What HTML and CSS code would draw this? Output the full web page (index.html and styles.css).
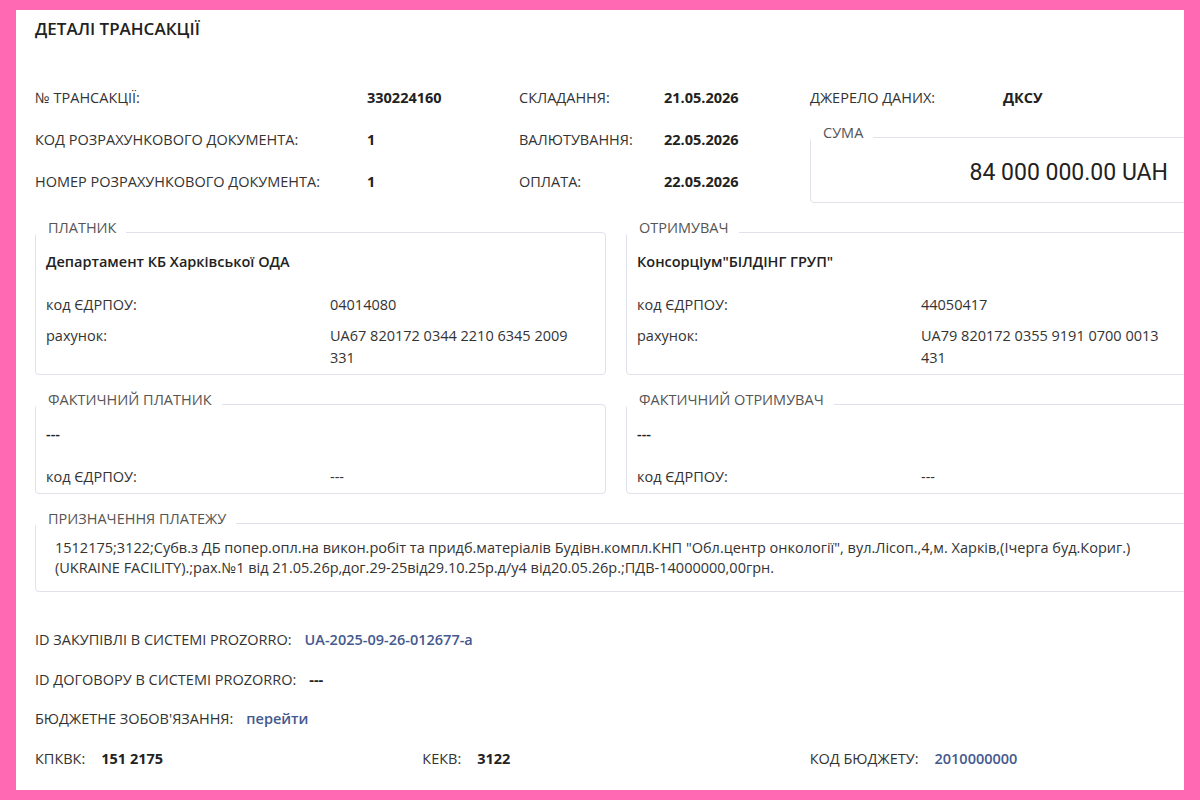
FILE: index.html
```html
<!DOCTYPE html>
<html lang="uk">
<head>
   <meta charset="UTF-8">
   <meta name="viewport" content="width=device-width, initial-scale=1.0">
   <title>Деталі трансакції</title>
   <link rel="stylesheet" href="styles.css">
</head>

<body>
   <div class="frame">
      <div class="page">
         <h1>ДЕТАЛІ ТРАНСАКЦІЇ</h1>

         <!-- шапка трансакції -->
         <div class="info">
            <span class="lbl">№ ТРАНСАКЦІЇ:</span><span class="val">330224160</span>
            <span class="lbl">СКЛАДАННЯ:</span><span class="val">21.05.2026</span>
            <span class="lbl">ДЖЕРЕЛО ДАНИХ:</span><span class="val">ДКСУ</span>
            <span class="lbl">КОД РОЗРАХУНКОВОГО ДОКУМЕНТА:</span><span class="val">1</span>
            <span class="lbl">ВАЛЮТУВАННЯ:</span><span class="val">22.05.2026</span>
            <span class="lbl">НОМЕР РОЗРАХУНКОВОГО ДОКУМЕНТА:</span><span class="val">1</span>
            <span class="lbl">ОПЛАТА:</span><span class="val">22.05.2026</span>

            <fieldset class="box sum">
               <legend>СУМА</legend>
               <div class="amount">84 000 000.00 UAH</div>
            </fieldset>
         </div>

         <!-- сторони -->
         <div class="parties">
            <fieldset class="box">
               <legend>ПЛАТНИК</legend>
               <div class="name">Департамент КБ Харківської ОДА</div>
               <div class="rows">
                  <span>код ЄДРПОУ:</span><span>04014080</span>
                  <span>рахунок:</span><span>UA67 820172 0344 2210 6345 2009 331</span>
               </div>
            </fieldset>

            <fieldset class="box">
               <legend>ОТРИМУВАЧ</legend>
               <div class="name">Консорціум"БІЛДІНГ ГРУП"</div>
               <div class="rows">
                  <span>код ЄДРПОУ:</span><span>44050417</span>
                  <span>рахунок:</span><span>UA79 820172 0355 9191 0700 0013 431</span>
               </div>
            </fieldset>

            <fieldset class="box">
               <legend>ФАКТИЧНИЙ ПЛАТНИК</legend>
               <div class="name">---</div>
               <div class="rows">
                  <span>код ЄДРПОУ:</span><span>---</span>
               </div>
            </fieldset>

            <fieldset class="box">
               <legend>ФАКТИЧНИЙ ОТРИМУВАЧ</legend>
               <div class="name">---</div>
               <div class="rows">
                  <span>код ЄДРПОУ:</span><span>---</span>
               </div>
            </fieldset>
         </div>

         <fieldset class="box purpose">
            <legend>ПРИЗНАЧЕННЯ ПЛАТЕЖУ</legend>
            <p>1512175;3122;Субв.з ДБ попер.опл.на викон.робіт та придб.матеріалів Будівн.компл.КНП "Обл.центр онкології", вул.Лісоп.,4,м. Харків,(Ічерга буд.Кориг.) (UKRAINE FACILITY).;рах.№1 від 21.05.26р,дог.29-25від29.10.25р.д/у4 від20.05.26р.;ПДВ-14000000,00грн.</p>
         </fieldset>

         <!-- додаткові реквізити -->
         <div class="extra">
            <div><span class="lbl">ID ЗАКУПІВЛІ В СИСТЕМІ PROZORRO:</span><a class="link" href="#">UA-2025-09-26-012677-a</a></div>
            <div><span class="lbl">ID ДОГОВОРУ В СИСТЕМІ PROZORRO:</span><span class="val">---</span></div>
            <div><span class="lbl">БЮДЖЕТНЕ ЗОБОВ'ЯЗАННЯ:</span><a class="link" href="#">перейти</a></div>
            <div class="codes">
               <div><span class="lbl">КПКВК:</span><span class="val">151 2175</span></div>
               <div><span class="lbl">КЕКВ:</span><span class="val">3122</span></div>
               <div><span class="lbl">КОД БЮДЖЕТУ:</span><a class="link" href="#">2010000000</a></div>
            </div>
         </div>
      </div>
   </div>
</body>

</html>
```

FILE: styles.css
```css
* {
   box-sizing: border-box;
}

html,
body {
   margin: 0;
   height: 100%;
}

body {
   background: #ff69b4;
   padding: 10px 16px;
   font-family: 'Open Sans', 'Noto Sans', Arial, sans-serif;
   font-size: 14.5px;
   color: #333;
}

.frame {
   background: #fff;
   height: 780px;
   overflow: hidden;
   padding: 7px 0 0 19px;
}

.page {
   width: 1162px;
}

h1 {
   margin: 0;
   font-size: 17px;
   line-height: 24px;
   font-weight: 600;
   color: #222;
}

.lbl {
   color: #333;
}

.val {
   font-weight: 700;
   color: #222;
}

.info {
   margin-top: 46px;
   display: grid;
   grid-template-columns: 332px 152px 145px 146px 193px 1fr;
   row-gap: 20px;
   line-height: 22px;
}

/* рамки з підписом */
.box {
   margin: 0;
   min-width: 0;
   border: 1px solid #dfe1ed;
   border-radius: 4px;
   padding: 5px 20px 5px 10px;
}

.box legend {
   margin-left: -10px;
   padding: 0 10px 8px 12px;
   line-height: 20px;
   color: #555;
}

.sum {
   grid-column: 5 / 7;
   grid-row: 2 / 4;
   align-self: start;
   margin: -6px 0 -10px;
   padding: 7px 28px 14px 10px;
}

.amount {
   text-align: right;
   font-family: Roboto, 'Liberation Sans', Arial, sans-serif;
   font-size: 23px;
   line-height: 30px;
   color: #222;
}

.parties {
   margin-top: 25px;
   display: grid;
   grid-template-columns: 1fr 1fr;
   column-gap: 20px;
   row-gap: 15px;
}

.name {
   font-weight: 600;
   color: #222;
   line-height: 22px;
   margin-bottom: 21px;
}

.rows {
   display: grid;
   grid-template-columns: 284px 1fr;
   row-gap: 9px;
   line-height: 22px;
}

.purpose {
   margin-top: 15px;
   padding: 1px 10px 13px;
}

.purpose p {
   margin: 0;
   padding: 0 0 0 9px;
   line-height: 20px;
}

.extra {
   margin-top: 37px;
   display: flex;
   flex-direction: column;
   gap: 17.5px;
   line-height: 22px;
}

.extra .val,
.extra .link {
   margin-left: 13px;
}

.codes .val,
.codes .link {
   margin-left: 16px;
}

.link {
   color: #44598e;
   font-weight: 600;
   text-decoration: none;
}

.codes {
   display: grid;
   grid-template-columns: 1fr 1fr 1fr;
}
```
